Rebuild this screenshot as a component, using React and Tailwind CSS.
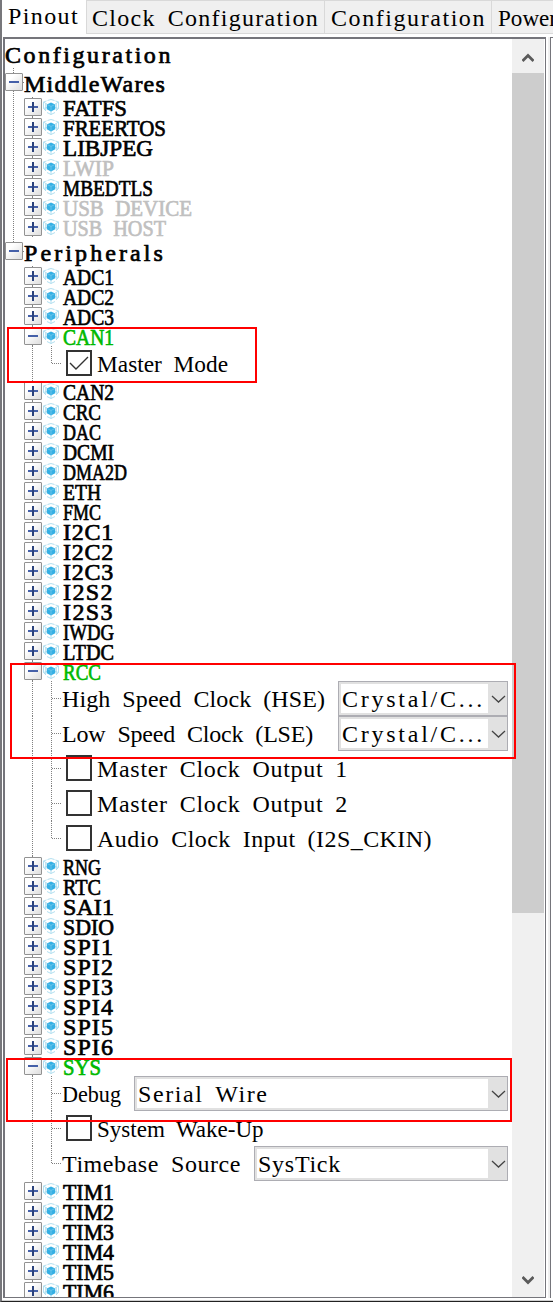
const PITCH = { regular: 12, bold: 13 };
const FONT_SIZE = 24;
const SPACE = 6;
const measure = (text) => {
  const ctx = document.createElement("canvas").getContext("2d");
  ctx.font = `${FONT_SIZE}px "Liberation Serif"`;
  return ctx.measureText(text).width;
};

/* Spreads or condenses a string so that it fills a fixed character pitch. */
function fit(text, inner, pitch) {
  const natural = measure(text);
  const spaces = text.split(" ").length - 1;
  const extra = pitch - SPACE;
  const spread = (inner - natural - extra * spaces) / (text.length - spaces);
  if (spread >= -0.3) {
    return { letterSpacing: `${spread}px`, wordSpacing: `${extra - spread}px` };
  }
  const scale = inner / (natural + extra * spaces);
  return { wordSpacing: `${extra}px`, transform: `scaleX(${scale})` };
}

function Label({ text, bold = false, tight = false, color = "text-black" }) {
  const pitch = bold ? PITCH.bold : PITCH.regular;
  const width = text.length * pitch;
  return (
    <span className={`block shrink-0 ${tight ? "h-5 leading-5" : "h-7 leading-7"}`} style={{ width }}>
      <span
        className={`block w-max origin-left whitespace-pre font-['Liberation_Serif',serif] text-[24px] ${tight ? "leading-5" : "leading-7"} ${color} ${bold ? "[-webkit-text-stroke:0.7px]" : ""}`}
        style={fit(text, width - 1, pitch)}
      >
        {text}
      </span>
    </span>
  );
}

function Toggle({ open }) {
  return (
    <svg className="block h-[18px] w-[18px] shrink-0" viewBox="0 0 18 18">
      <defs>
        <linearGradient id="face" x1="0" y1="0" x2="1" y2="1">
          <stop offset="0.3" stopColor="#fff" />
          <stop offset="1" stopColor="#dcdcdc" />
        </linearGradient>
      </defs>
      <rect x="0.5" y="0.5" width="17" height="17" rx="0.5" fill="url(#face)" stroke="#929292" />
      {!open && <path d="M9 4V14" stroke="#2a427c" strokeWidth="2" />}
      <path d="M4 9H14" stroke="#4560a8" strokeWidth="2" />
      {!open && <path d="M9 7V11" stroke="#2a427c" strokeWidth="2" />}
    </svg>
  );
}

function Cube() {
  return (
    <svg className="block h-4 w-4 shrink-0" viewBox="0 0 16 16" fill="none">
      <path
        d="M.5 3L3.5 2M.5 3V9.5L3 12M15.5 3L12.5 2M15.5 3V9.5L13 12M4.5 1.5L8 .5L11.5 1.5M4 13.5L8 15.5L12 13.5M.5 3L4.5 5.5M15.5 3L11.5 5.5M.5 9.5L4 8.5M15.5 9.5L12 8.5M8 11V15.5M2.7 4.5V11M13.3 4.5V11"
        stroke="#a9dbee"
        strokeWidth="0.9"
      />
      <path d="M8 3.4L12.2 5.4V10.2L8 12.4L3.8 10.2V5.4Z" fill="#35b0e4" />
      <path d="M4.3 5.7L8 7.4L11.7 5.7M8 7.4V11.8" stroke="#7bcbed" strokeWidth="0.7" />
    </svg>
  );
}

function Chevron() {
  return (
    <svg className="block h-2 w-[15px]" viewBox="0 0 15 8" fill="none">
      <path d="M1 1L7.5 7L14 1" stroke="#444" strokeWidth="1.3" />
    </svg>
  );
}

const vline = "bg-[repeating-linear-gradient(to_bottom,#808080_0_1px,transparent_1px_2px)]";
const hline = "bg-[repeating-linear-gradient(to_right,#808080_0_1px,transparent_1px_2px)]";

function RootRow({ text, last }) {
  return (
    <div className="flex h-[29px]">
      <div className="flex w-[18px] flex-col items-start">
        <div className={`ml-2 h-[5px] w-px ${vline}`} />
        <Toggle open />
        {!last && <div className={`ml-2 h-1.5 w-px ${vline}`} />}
      </div>
      <div className={`mt-[14px] h-px w-px ${hline}`} />
      <div className="pt-[2px]">
        <Label text={text} bold />
      </div>
    </div>
  );
}

function Trunk({ show }) {
  return (
    <div className="w-[19px] shrink-0 pl-2">
      {show && <div className={`h-full w-px ${vline}`} />}
    </div>
  );
}

const stateColor = { on: "text-[#00b900]", off: "text-[#c0c0c0]" };

function NodeRow({ text, open, state, trunk }) {
  return (
    <div className="flex h-5">
      <Trunk show={trunk} />
      <div className="flex w-[18px] flex-col items-start">
        <div className="ml-2 h-px w-px bg-[#808080]" />
        <Toggle open={open} />
        <div className="ml-2 h-px w-px bg-[#808080]" />
      </div>
      <div className="ml-px mt-[2px]">
        <Cube />
      </div>
      <div className="ml-1 mt-px">
        <Label text={text} bold tight color={stateColor[state]} />
      </div>
    </div>
  );
}

function Select({ value }) {
  return (
    <div className="flex h-[35px] flex-1 border border-[#adadb3] bg-[#e1e1e1] py-[2px] pl-[2px]">
      <div className="flex-1 bg-white pl-px pt-px">
        <Label text={value} />
      </div>
      <div className="flex w-[19px] shrink-0 items-center justify-end pr-px">
        <Chevron />
      </div>
    </div>
  );
}

function ChildRow({ item, last }) {
  const check = item.check !== undefined;
  return (
    <div className="flex h-[35px] w-[503px]">
      <div className="w-[46px] shrink-0 pl-[27px]">
        <div className={`h-full w-px ${vline}`} />
      </div>
      <div className="flex w-[11px] shrink-0">
        <div className={`w-px ${vline} ${last ? "h-[18px]" : "h-full"}`} />
        <div className={`mt-[17px] h-px flex-1 ${hline}`} />
      </div>
      {check && (
        <div className="ml-1 mr-[5px] mt-1 flex h-[26px] w-[26px] shrink-0 items-center justify-center border-2 border-[#333] bg-white">
          {item.check && (
            <svg className="h-[22px] w-[22px] shrink-0" viewBox="0 0 22 22" fill="none">
              <path d="M2 11L8 17L20 5" stroke="#333" strokeWidth="1.4" />
            </svg>
          )}
        </div>
      )}
      <div className="shrink-0 pt-1">
        <Label text={item.text} />
      </div>
      {item.select && (
        <>
          <div className={`shrink-0 ${item.short ? "w-6" : "w-3"}`} />
          <Select value={item.select} />
        </>
      )}
    </div>
  );
}

const middlewares = [
  { text: "FATFS" },
  { text: "FREERTOS" },
  { text: "LIBJPEG" },
  { text: "LWIP", state: "off" },
  { text: "MBEDTLS" },
  { text: "USB DEVICE", state: "off" },
  { text: "USB HOST", state: "off" },
];

const nodes = (names) => names.split(" ").map((text) => ({ text }));

const peripherals = [
  ...nodes("ADC1 ADC2 ADC3"),
  { text: "CAN1", state: "on", children: [{ text: "Master Mode", check: true }] },
  ...nodes("CAN2 CRC DAC DCMI DMA2D ETH FMC I2C1 I2C2 I2C3 I2S2 I2S3 IWDG LTDC"),
  {
    text: "RCC",
    state: "on",
    children: [
      { text: "High Speed Clock (HSE)", select: "Crystal/C..." },
      { text: "Low Speed Clock (LSE)", select: "Crystal/C...", short: true },
      { text: "Master Clock Output 1", check: false },
      { text: "Master Clock Output 2", check: false },
      { text: "Audio Clock Input (I2S_CKIN)", check: false },
    ],
  },
  ...nodes("RNG RTC SAI1 SDIO SPI1 SPI2 SPI3 SPI4 SPI5 SPI6"),
  {
    text: "SYS",
    state: "on",
    children: [
      { text: "Debug", select: "Serial Wire" },
      { text: "System Wake-Up", check: false },
      { text: "Timebase Source", select: "SysTick" },
    ],
  },
  ...nodes("TIM1 TIM2 TIM3 TIM4 TIM5 TIM6"),
];

function Group({ items, trunk }) {
  return items.map((n) => (
    <div key={n.text}>
      <NodeRow text={n.text} state={n.state} open={!!n.children} trunk={trunk} />
      {n.children?.map((c, i) => (
        <ChildRow key={c.text} item={c} last={i === n.children.length - 1} />
      ))}
    </div>
  ));
}

function Arrow({ up }) {
  return (
    <svg className={`h-[10px] w-3 ${up ? "" : "rotate-180"}`} viewBox="0 0 12 10" fill="none">
      <path d="M0.5 8L6 2.5L11.5 8" stroke="#5a5a5a" strokeWidth="2.8" />
    </svg>
  );
}

export default function App() {
  return (
    <div className="relative flex h-[1302px] w-[553px] flex-col overflow-hidden border-b border-l-2 border-b-[#222] border-l-[#77777b] bg-white">
      <div className="flex h-[37px] shrink-0">
        <div className="w-[84px] shrink-0 pl-[6px] pt-[2px]">
          <Label text="Pinout" />
        </div>
        <div className="flex h-[34px] shrink-0 border-y border-[#d9d9d9] bg-[#f0f0f0]">
          <div className="w-[238px] border-l border-[#d9d9d9] pl-[5px] pt-[3px]">
            <Label text="Clock Configuration" />
          </div>
          <div className="w-[167px] border-l border-[#d9d9d9] pl-[6px] pt-[3px]">
            <Label text="Configuration" />
          </div>
          <div className="w-[80px] border-l border-[#d9d9d9] pl-[6px] pt-[3px]">
            <Label text="Power" />
          </div>
        </div>
      </div>
      <div className="flex h-[1261px] shrink-0 pl-px">
        <div className="flex w-[543px] shrink-0 border-2 border-b border-r border-[#75757b]">
          <div className="w-[507px] shrink-0 overflow-hidden">
            <div className="h-[29px] pt-[2px]">
              <Label text="Configuration" bold />
            </div>
            <RootRow text="MiddleWares" />
            <Group items={middlewares} trunk />
            <RootRow text="Peripherals" last />
            <Group items={peripherals} />
          </div>
          <div className="flex w-8 shrink-0 flex-col items-center bg-[#f0f0f0]">
            <div className="flex h-[34px] items-center pt-[3px]">
              <Arrow up />
            </div>
            <div className="h-[840px] w-full bg-[#cdcdcd]" />
            <div className="flex flex-1 items-end pb-[12px]">
              <Arrow />
            </div>
          </div>
        </div>
        <div className="ml-[2px] w-[2px] bg-[#f0f0f0]" />
        <div className="flex-1 border-l border-t border-[#75757b]" />
      </div>
      <div className="mt-[2px] h-px bg-[#d0d0d0]" />
      <div className="absolute left-[5px] top-[327px] h-14 w-[250px] border-2 border-[#f00]" />
      <div className="absolute left-2 top-[663px] h-24 w-[506px] border-2 border-[#f00]" />
      <div className="absolute left-1 top-[1058px] h-16 w-[506px] border-2 border-[#f00]" />
    </div>
  );
}
